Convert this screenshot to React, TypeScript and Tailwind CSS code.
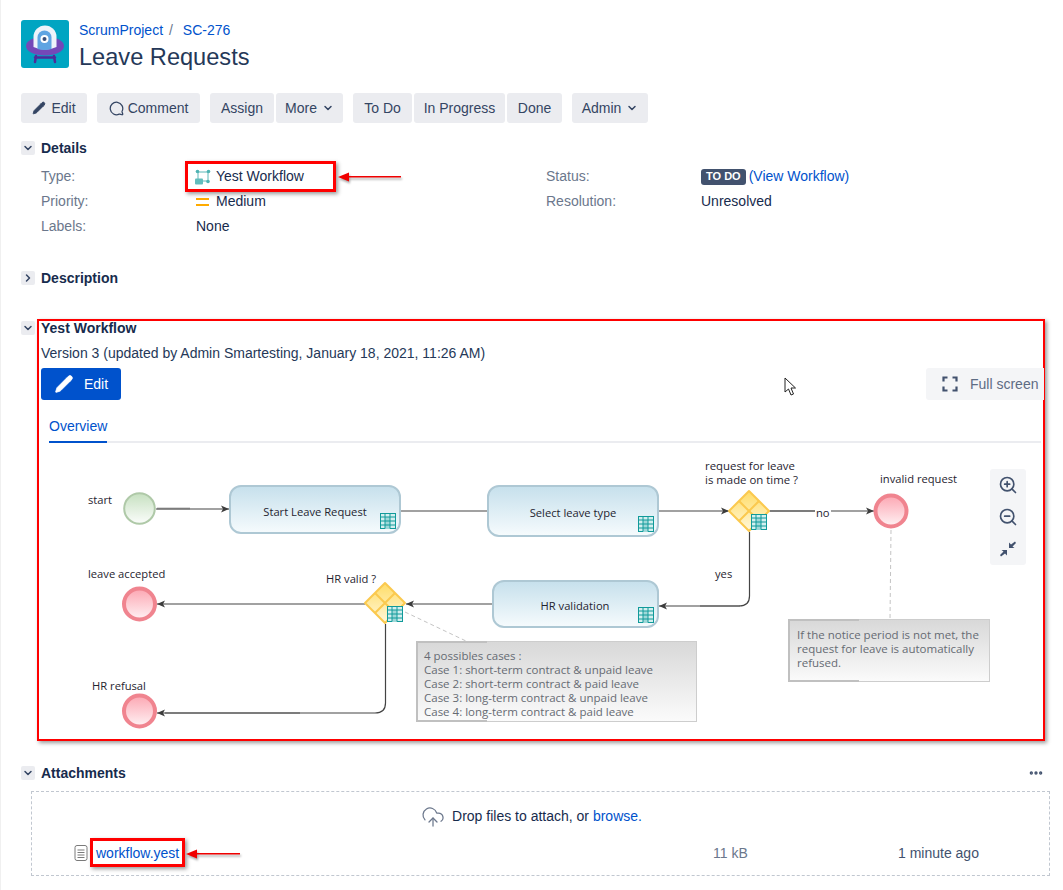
import React from 'react';
import { ChevronDown, ChevronRight, Pencil, MessageCircle, ZoomIn, ZoomOut, MoreHorizontal, CloudUpload } from 'lucide-react';

const Toggle = ({ open = true, className = '' }: { open?: boolean; className?: string }) => (
  <span className={`w-[14px] h-[14px] bg-[#ebecf0] rounded-[2px] flex items-center justify-center text-[#344563] ${className}`}>
    {open ? <ChevronDown className="w-3 h-3" strokeWidth={3} /> : <ChevronRight className="w-3 h-3" strokeWidth={3} />}
  </span>
);

const Btn = ({ children, className = '' }: { children: React.ReactNode; className?: string }) => (
  <button className={`h-[30px] bg-[#ebecf0] text-[#344563] rounded-[3px] flex items-center justify-center text-[14px] ${className}`}>
    {children}
  </button>
);

const ProjectIcon = () => (
  <svg width="48" height="48" viewBox="0 0 48 48" className="shrink-0">
    <rect width="48" height="48" rx="3" fill="#00a5c2" />
    <path d="M15 36l-1 6M33 36l1 6M14 37.5h20" stroke="#4f2a9a" strokeWidth="2.5" strokeLinecap="round" fill="none" />
    <ellipse cx="24" cy="26" rx="19" ry="9.5" fill="#7448b8" />
    <path d="M12.5 27V17a11.5 11.5 0 0 1 23 0v10q-11.5 5-23 0z" fill="#eef3fa" />
    <path d="M16.5 29V17.5a7 7 0 0 1 14 0V29q-7 2-14 0z" fill="#5fa4e2" />
    <circle cx="23.5" cy="19" r="4" fill="#fff" />
    <circle cx="23.5" cy="19" r="2" fill="#3a4f7a" />
  </svg>
);

const WorkflowIcon = () => (
  <svg width="16" height="16" viewBox="0 0 16 16" className="shrink-0">
    <path d="M3 3h10M3 3v8M13 3v9H8" stroke="#5cb8b8" strokeWidth="1" fill="none" />
    <circle cx="2.5" cy="2.5" r="1.8" fill="#4fb3b3" />
    <circle cx="13.5" cy="2.5" r="1.8" fill="#4fb3b3" />
    <circle cx="13" cy="12.5" r="1.8" fill="#4fb3b3" />
    <rect x="0" y="9.5" width="8" height="6" rx="1" fill="#62bdbd" />
  </svg>
);

const TableIcon = ({ x, y }: { x: number; y: number }) => (
  <g transform={`translate(${x} ${y})`}>
    <rect x="0.5" y="0.5" width="15" height="15" fill="#d3efef" stroke="#109a9a" />
    <rect x="5" y="4" width="5" height="12" fill="#9ed8d8" />
    <path d="M0.5 4h15M0.5 8h15M0.5 12h15M5 0.5v15M10 0.5v15" stroke="#109a9a" strokeWidth="1" />
  </g>
);

const Task = ({ x, y, w, h, label, tx, ty }: { x: number; y: number; w: number; h: number; label: string; tx: number; ty: number }) => (
  <g>
    <rect x={x} y={y} width={w} height={h} rx="11" fill="url(#taskFill)" stroke="#aec8d4" strokeWidth="2" />
    <text x={tx} y={ty} textAnchor="middle" fontSize="11.2" fill="#1f2430">{label}</text>
    <TableIcon x={x + w - 20} y={y + h - 20} />
  </g>
);

const Gate = ({ cx, cy }: { cx: number; cy: number }) => (
  <g>
    <path d={`M${cx} ${cy - 20}L${cx + 20} ${cy}L${cx} ${cy + 20}L${cx - 20} ${cy}Z`} fill="url(#gateFill)" stroke="#fbc94e" strokeWidth="2" strokeLinejoin="round" />
    <path d={`M${cx - 10} ${cy - 10}L${cx + 10} ${cy + 10}M${cx + 10} ${cy - 10}L${cx - 10} ${cy + 10}`} stroke="#fbc94e" strokeWidth="2" />
    <TableIcon x={cx + 2} y={cy + 3} />
  </g>
);

const EndEvent = ({ cx, cy }: { cx: number; cy: number }) => (
  <circle cx={cx} cy={cy} r="15.5" fill="url(#endFill)" stroke="#f0848f" strokeWidth="4" />
);

const Note = ({ x, y, w, h, lines, tx, ty }: { x: number; y: number; w: number; h: number; lines: string[]; tx: number; ty: number }) => (
  <g>
    <rect x={x + 0.5} y={y + 0.5} width={w} height={h} fill="url(#noteFill)" stroke="#cdcdcd" />
    <path d={`M${x + 71} ${y + 1}H${x + 1}V${y + h}H${x + 71}`} fill="none" stroke="#c0c0c0" strokeWidth="2" />
    {lines.map((l, i) => (
      <text key={l} x={x + tx} y={y + ty + i * 14} fontSize="11.5" fill="#666b73">{l}</text>
    ))}
  </g>
);

const Diagram = () => (
  <svg width="1000" height="296" viewBox="41 443 1000 296" className="block" style={{ fontFamily: '"Open Sans", sans-serif' }}>
    <defs>
      <linearGradient id="taskFill" x1="0" y1="0" x2="0" y2="1">
        <stop offset="0" stopColor="#c6e0ec" />
        <stop offset="1" stopColor="#f6fbfd" />
      </linearGradient>
      <linearGradient id="gateFill" x1="0" y1="0" x2="0" y2="1">
        <stop offset="0" stopColor="#ffdc66" />
        <stop offset="1" stopColor="#fff8dc" />
      </linearGradient>
      <linearGradient id="endFill" x1="0" y1="0" x2="0" y2="1">
        <stop offset="0" stopColor="#fca6b2" />
        <stop offset="1" stopColor="#fff2f4" />
      </linearGradient>
      <linearGradient id="startFill" x1="0" y1="0" x2="0" y2="1">
        <stop offset="0" stopColor="#c6e0c0" />
        <stop offset="1" stopColor="#fbfdfb" />
      </linearGradient>
      <linearGradient id="noteFill" x1="0" y1="0" x2="0" y2="1">
        <stop offset="0" stopColor="#d8d8d8" />
        <stop offset="1" stopColor="#fbfbfb" />
      </linearGradient>
      <marker id="head" markerWidth="9" markerHeight="8" refX="8" refY="4" orient="auto" markerUnits="userSpaceOnUse">
        <path d="M0 0.5L8 4L0 7.5L2 4Z" fill="#3c3c3c" />
      </marker>
    </defs>

    <g stroke="#b4b4b4" strokeWidth="2" fill="none">
      <path d="M157 508.5H190" />
      <path d="M770 511H815" />
      <path d="M700 606H740" />
      <path d="M165 713H300" />
    </g>
    <g stroke="#444" strokeWidth="1.2" fill="none">
      <path d="M156 509H229" markerEnd="url(#head)" />
      <path d="M401 511H488" />
      <path d="M659 511H729" markerEnd="url(#head)" />
      <path d="M769 511H874" markerEnd="url(#head)" />
      <path d="M749.5 532V596Q749.5 606 739 606H659" markerEnd="url(#head)" />
      <path d="M493 604H406" markerEnd="url(#head)" />
      <path d="M365 604H157" markerEnd="url(#head)" />
      <path d="M385.5 624V703Q385.5 713 375 713H157" markerEnd="url(#head)" />
    </g>
    <g stroke="#c4c4c4" strokeWidth="1" strokeDasharray="4 3" fill="none">
      <path d="M891 530L890 620" />
      <path d="M405 612L466 641" />
    </g>

    <circle cx="139.5" cy="508.5" r="15.3" fill="url(#startFill)" stroke="#afc9a8" strokeWidth="2" />
    <Task x={230} y={486} w={170} h={47} label="Start Leave Request" tx={315} ty={516} />
    <Task x={488} y={486} w={170} h={50} label="Select leave type" tx={573} ty={517} />
    <Task x={493} y={581} w={165} h={46} label="HR validation" tx={575} ty={610} />
    <Gate cx={749} cy={511} />
    <Gate cx={385} cy={603} />
    <EndEvent cx={891} cy={511} />
    <EndEvent cx={139.5} cy={604} />
    <EndEvent cx={139.5} cy={711} />

    <rect x="815" y="505" width="16" height="14" fill="#fff" />
    <g fontSize="11.2" fill="#1f2430">
      <text x="88" y="504">start</text>
      <text x="88" y="578">leave accepted</text>
      <text x="92" y="690">HR refusal</text>
      <text x="326" y="583">HR valid ?</text>
      <text x="705" y="470" fontSize="11.4">request for leave</text>
      <text x="705" y="484" fontSize="11.4">is made on time ?</text>
      <text x="880" y="483">invalid request</text>
      <text x="816" y="517">no</text>
      <text x="715" y="578">yes</text>
    </g>

    <Note
      x={416}
      y={641}
      w={280}
      h={80}
      tx={8}
      ty={19}
      lines={[
        '4 possibles cases :',
        'Case 1: short-term contract & unpaid leave',
        'Case 2: short-term contract & paid leave',
        'Case 3: long-term contract & unpaid leave',
        'Case 4: long-term contract & paid leave',
      ]}
    />
    <Note
      x={788}
      y={619}
      w={201}
      h={62}
      tx={9}
      ty={20}
      lines={['If the notice period is not met, the', 'request for leave is automatically', 'refused.']}
    />
  </svg>
);

const Cursor = () => (
  <svg width="13" height="20" viewBox="0 0 13 20" className="absolute left-[745px] top-[56px]">
    <path d="M1 1V15L4.5 12L7 18L9.5 17L7 11H11.5Z" fill="#fff" stroke="#222" strokeWidth="1" strokeLinejoin="round" />
  </svg>
);

const Arrow = ({ width, className }: { width: number; className: string }) => (
  <svg width={width} height="14" viewBox={`0 0 ${width} 14`} className={`absolute drop-shadow-[1px_2px_1px_rgba(0,0,0,0.35)] ${className}`}>
    <path d={`M0 7L11 2.5V6H${width}V7.5H11V11.5Z`} fill="#f00000" />
  </svg>
);

export default function App() {
  return (
    <div
      className="relative w-[1063px] h-[890px] overflow-hidden bg-white border-l border-[#f0f0f0] pt-5 pl-[20px] text-[14px] text-[#172b4d]"
      style={{ fontFamily: '"Liberation Sans", Arial, sans-serif' }}
    >
      {/* Header */}
      <div className="flex gap-[10px] h-12">
        <ProjectIcon />
        <div>
          <div className="h-[20px] leading-[20px] text-[#0052cc]">
            ScrumProject <span className="ml-[2px] text-[#6b778c]">/</span>
            <span className="ml-[10px]">SC-276</span>
          </div>
          <h1 className="text-[23.6px] leading-[32px] mt-[1px] text-[#253858] font-normal">Leave Requests</h1>
        </div>
      </div>

      {/* Toolbar */}
      <div className="flex mt-[25px] gap-[10px]">
        <Btn className="w-[66px] gap-[5px]">
          <Pencil className="w-[14px] h-[14px] fill-[#344563]" strokeWidth={1.5} />
          Edit
        </Btn>
        <Btn className="w-[103px] gap-[4px]">
          <MessageCircle className="w-[15px] h-[15px] -scale-x-100" strokeWidth={2} />
          Comment
        </Btn>
        <div className="flex gap-[2px]">
          <Btn className="w-[64px]">Assign</Btn>
          <Btn className="w-[67px] gap-[5px]">
            More
            <ChevronDown className="w-3 h-3" strokeWidth={3} />
          </Btn>
        </div>
        <div className="flex gap-[2px]">
          <Btn className="w-[59px]">To Do</Btn>
          <Btn className="w-[91px]">In Progress</Btn>
          <Btn className="w-[55px]">Done</Btn>
        </div>
        <Btn className="w-[76px] gap-[5px]">
          Admin
          <ChevronDown className="w-3 h-3" strokeWidth={3} />
        </Btn>
      </div>

      {/* Details */}
      <div className="mt-[15px] flex items-center gap-[6px] h-5">
        <Toggle />
        <h2 className="font-bold text-[14px] text-[#172b4d]">Details</h2>
      </div>
      <div className="mt-[6px] ml-5 grid grid-cols-[155px_350px_155px_1fr] auto-rows-[25px] items-center">
        <span className="text-[#6b778c]">Type:</span>
        <span className="flex items-center gap-[5px] -ml-[1px]">
          <WorkflowIcon />
          Yest Workflow
        </span>
        <span className="text-[#6b778c]">Status:</span>
        <span className="flex items-center gap-[3px]">
          <span className="bg-[#42526e] text-white text-[11px] font-bold rounded-[3px] px-[5px] h-[16px] leading-[15px]">TO DO</span>
          <span className="text-[#0052cc]">(View Workflow)</span>
        </span>
        <span className="text-[#6b778c]">Priority:</span>
        <span className="flex items-center gap-[7px]">
          <span className="w-[13px] h-[8px] border-y-2 border-[#ffab00]" />
          Medium
        </span>
        <span className="text-[#6b778c]">Resolution:</span>
        <span>Unresolved</span>
        <span className="text-[#6b778c]">Labels:</span>
        <span>None</span>
      </div>

      {/* Description */}
      <div className="mt-[29px] flex items-center gap-[6px] h-5">
        <Toggle open={false} />
        <h2 className="font-bold text-[14px]">Description</h2>
      </div>

      {/* Yest Workflow */}
      <section className="relative mt-[31px] ml-[16px] w-[1008px] h-[422px] border-2 border-[#ff0000] shadow-[2px_2px_4px_rgba(0,0,0,0.4)] pl-[2px]">
        <Toggle className="absolute -left-[18px] top-0" />
        <h2 className="font-bold text-[14px] leading-[14px]">Yest Workflow</h2>
        <p className="mt-[7px] h-[20px] leading-[22px] text-[#253858]">Version 3 (updated by Admin Smartesting, January 18, 2021, 11:26 AM)</p>
        <div className="mt-[6px] flex justify-between">
          <button className="w-[80px] h-[32px] bg-[#0052cc] text-white rounded-[3px] flex items-center justify-center gap-[10px]">
            <Pencil className="w-[20px] h-[20px] fill-white" strokeWidth={1} />
            Edit
          </button>
          <button className="w-[118px] h-[32px] bg-[#f4f5f7] text-[#5e6c84] rounded-l-[3px] flex items-center gap-[12px] pl-[16px] -mr-[1px]">
            <svg width="16" height="16" viewBox="0 0 16 16" fill="none" stroke="#42526e" strokeWidth="2.2">
              <path d="M1.5 5.5V1.5H5.5M10.5 1.5H14.5V5.5M14.5 10.5V14.5H10.5M5.5 14.5H1.5V10.5" />
            </svg>
            Full screen
          </button>
        </div>
        <div className="mt-[11px] ml-[8px] mr-[2px] h-[32px] border-b-2 border-[#ebecf0] flex">
          <span className="h-[32px] border-b-2 border-[#0052cc] text-[#0052cc] leading-[31px] w-[58px]">Overview</span>
        </div>
        <Diagram />
        <div className="absolute left-[951px] top-[148px] w-[36px] flex flex-col gap-0 text-[#42526e]">
          <div className="h-[32px] bg-[#f4f5f7] rounded-t-[3px] flex items-center justify-center">
            <ZoomIn className="w-[20px] h-[20px]" strokeWidth={2} />
          </div>
          <div className="h-[32px] bg-[#f4f5f7] flex items-center justify-center">
            <ZoomOut className="w-[20px] h-[20px]" strokeWidth={2} />
          </div>
          <div className="h-[32px] bg-[#f4f5f7] rounded-b-[3px] flex items-center justify-center">
            <svg width="18" height="18" viewBox="0 0 18 18" fill="#42526e">
              <path d="M16 1.5L17 3L13.5 6.5L15.5 8H10V2.5L12 4.5ZM2 16.5L1 15L4.5 11.5L2.5 10H8V15.5L6 13.5Z" />
            </svg>
          </div>
        </div>
        <Cursor />
      </section>

      {/* Attachments */}
      <div className="relative mt-[22px] flex items-center gap-[6px] h-5 w-[1023px]">
        <Toggle />
        <h2 className="font-bold text-[14px]">Attachments</h2>
        <MoreHorizontal className="absolute right-0 top-[2px] w-[16px] h-[16px] text-[#42526e]" strokeWidth={3} />
      </div>
      <div className="relative mt-[8px] ml-[10px] w-[1019px] h-[85px] border border-dashed border-[#c1c7d0]">
        <div className="flex items-center justify-center gap-[7px] h-[48px] pt-[1px] pr-[18px]">
          <CloudUpload className="w-[24px] h-[24px] text-[#6b778c]" strokeWidth={1.25} />
          <span>
            Drop files to attach, or <span className="text-[#0052cc]">browse.</span>
          </span>
        </div>
        <div className="flex items-center h-[22px] mt-[2px] pl-[42px]">
          <svg width="14" height="16" viewBox="0 0 14 16" fill="none" stroke="#7a7a7a" strokeWidth="1">
            <rect x="1" y="0.5" width="12" height="15" rx="2" />
            <path d="M3.5 5h7M3.5 7.5h7M3.5 10h7M3.5 12.5h7" />
          </svg>
          <span className="ml-[8px] w-[617px] text-[#0052cc]">workflow.yest</span>
          <span className="w-[185px] text-[#6b778c]">11 kB</span>
          <span className="text-[#42526e]">1 minute ago</span>
        </div>
      </div>

      {/* Annotations */}
      <div className="absolute left-[184px] top-[161px] w-[151px] h-[31px] border-[3px] border-[#ff0000] shadow-[2px_2px_4px_rgba(0,0,0,0.4)]" />
      <Arrow width={63} className="left-[337px] top-[170px]" />
      <div className="absolute left-[89px] top-[838px] w-[95px] h-[29px] border-[3px] border-[#ff0000] shadow-[2px_2px_4px_rgba(0,0,0,0.4)]" />
      <Arrow width={54} className="left-[185px] top-[847px]" />
    </div>
  );
}
